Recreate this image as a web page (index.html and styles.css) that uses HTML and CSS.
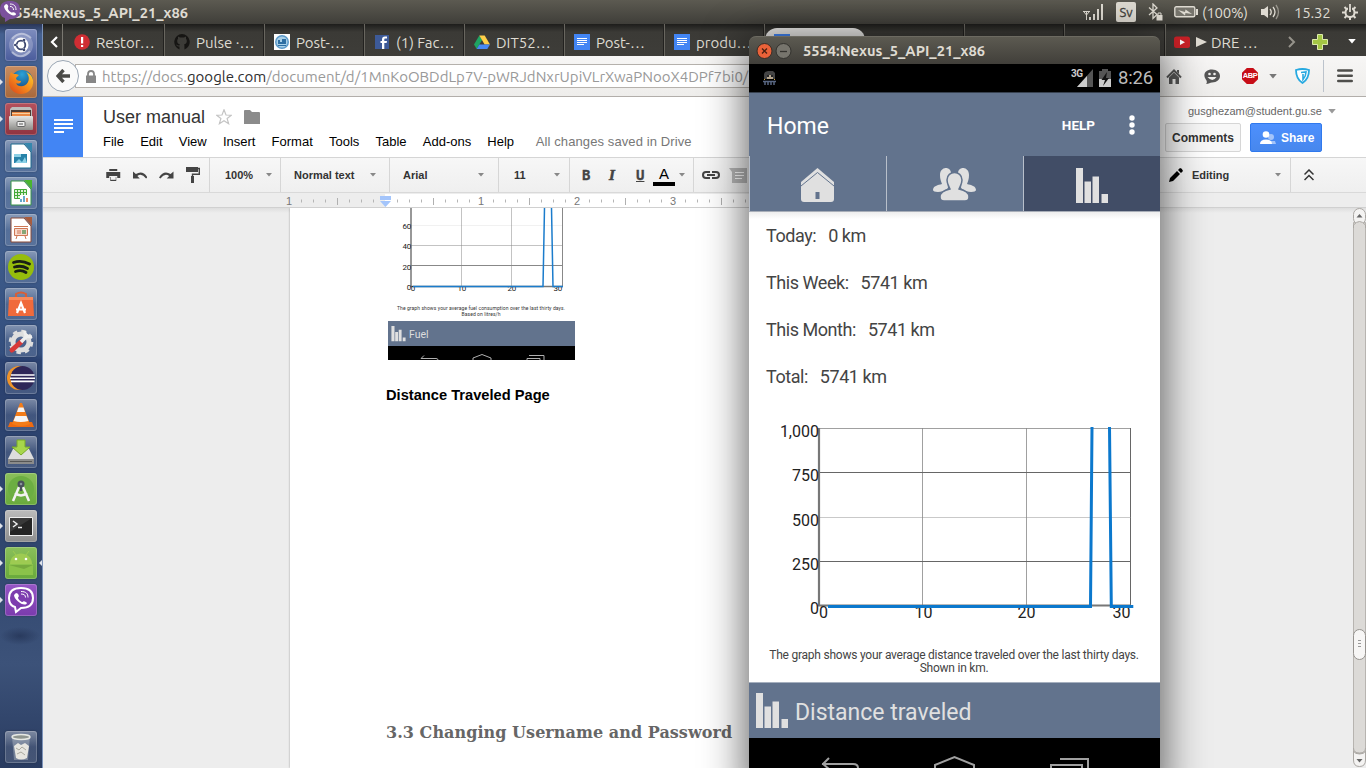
FILE: index.html
```html
<!DOCTYPE html>
<html lang="en">
<head>
<meta charset="utf-8">
<title>User manual</title>
<link rel="stylesheet" href="styles.css">
</head>
<body>
<svg class="defs" width="0" height="0">
  <defs>
    <linearGradient id="metal" x1="0" y1="0" x2="0" y2="1"><stop offset="0" stop-color="#e6e6e4"/><stop offset="1" stop-color="#8d8d8a"/></linearGradient>
    <radialGradient id="globe" cx=".5" cy=".2" r=".8"><stop offset="0" stop-color="#2ba3d8"/><stop offset="1" stop-color="#123a75"/></radialGradient>
    <linearGradient id="fox" x1="1" y1="0" x2="0" y2="1"><stop offset="0" stop-color="#ffce2e"/><stop offset=".5" stop-color="#f58a1c"/><stop offset="1" stop-color="#d9401a"/></linearGradient>
    <symbol id="bars" viewBox="0 0 32 35"><path d="M0 0h7v35H0zM8.500 13.500h6.500V35H8.500zM16.500 8.500h6.500V35h-6.500zM25.500 26H32v9h-6.500z"/></symbol>
    <symbol id="gdoc" viewBox="0 0 16 16"><path fill="#4285f4" d="M0 0h16v16H0z"/><path stroke="#fff" d="M3 4.500h10M3 6.500h10M3 8.500h10M3 10.500h7" stroke-width="1.100"/></symbol>
    <symbol id="down" viewBox="0 0 6 4"><path d="M0 0h6L3 3.500z"/></symbol>
  </defs>
</svg>

<header class="panel">
  <svg class="panel-viber" viewBox="0 0 20 22"><path fill="#7b519d" d="M10 1c6 0 10 2 10 9s-4 9-10 9l-5 3v-4C1 17 0 14 0 10 0 3 4 1 10 1z"/><path fill="#fff" d="M6 4c2 0 3 3 1.800 4 0 2 3 5 4.500 4.500 1.500-1 4 .5 3.700 2C13 18 4 11 4 6z"/><path fill="none" stroke="#fff" d="M10 4c4 0 6 2 6 6M10 6.500c2 0 3.500 1 3.500 3.500"/></svg>
  <h1 class="panel-title">5554:Nexus_5_API_21_x86</h1>
  <div class="tray">
    <svg class="tray-signal" viewBox="0 0 20 16"><path fill="none" stroke="#dfdbd2" d="M0 7.500h7M1 8l2.500 3L6 8M3.500 8v8"/><path fill="#dfdbd2" d="M6 13h2v3H6zM10 10h2v6h-2zM14 5h2v11h-2zM18 0h2v16h-2z"/></svg>
    <span class="tray-lang">Sv</span>
    <svg class="tray-bt" viewBox="0 0 15 18"><path fill="none" stroke="#dfdbd2" stroke-width="1.300" d="M1 4.500l8 7-4 4V1l4 4-8 7"/><path fill="#dfdbd2" d="M8.500 12h6v5.500h-6z"/><path fill="none" stroke="#dfdbd2" d="M10 12v-2h3v2"/></svg>
    <svg class="tray-bat" viewBox="0 0 24 12"><rect x=".8" y=".8" width="20" height="10" rx="1.500" fill="#77756d" stroke="#dfdbd2" stroke-width="1.400"/><path fill="#dfdbd2" d="M22 3h2v6h-2zM4 4l7 2 .5-2.500L18 8l-6.500-1-.5 2.500z"/></svg>
    <span class="tray-pct">(100%)</span>
    <svg class="tray-vol" viewBox="0 0 19 16"><path fill="#dfdbd2" d="M0 5h3l4-3v12l-4-3H0z"/><g fill="none" stroke="#dfdbd2" stroke-width="1.300"><path d="M9 5q2.500 3 0 6M12 3q4 5 0 10"/><path opacity=".5" d="M15 1q5 7 0 14"/></g></svg>
    <span class="tray-time">15.32</span>
    <svg class="tray-gear" viewBox="0 0 16 16"><circle cx="8" cy="8.500" r="4.500" fill="none" stroke="#dfdbd2" stroke-width="2"/><path stroke="#dfdbd2" stroke-width="2" d="M0 8.500h4M12 8.500h4M8 12v4M2.500 3l2.500 2.500M13.500 3L11 5.500M2.500 14L5 11.500M13.500 14L11 11.500"/><path stroke="#4a4942" stroke-width="4" d="M8 3v5"/><path stroke="#dfdbd2" stroke-width="1.800" d="M8 0v8"/></svg>
  </div>
</header>

<div class="desktop">
  <nav class="launcher">
    <div class="tile t-dash"><svg viewBox="0 0 32 32"><circle cx="16" cy="16" r="12" fill="#a6aed0" opacity=".5"/><path d="M7 10Q16 0 26 9M25 22Q16 32 7 23" stroke="#fff" opacity=".4" fill="none" stroke-width="2"/><circle cx="16" cy="16" r="7.500" fill="#fff"/><circle cx="16" cy="16" r="4.300" fill="none" stroke="#3c466e" stroke-width="1.800"/><path stroke="#fff" stroke-width="1.200" d="M13 16h-4M18 12.500l2-3.500M18 19.500l2 3.500"/><g fill="#3c466e"><circle cx="10.300" cy="16" r="1.300"/><circle cx="19" cy="11" r="1.300"/><circle cx="19" cy="21" r="1.300"/></g></svg></div>
    <div class="tile t-fox run"><svg viewBox="0 0 32 32"><circle cx="17" cy="15" r="11" fill="url(#globe)"/><path fill="url(#fox)" d="M6 6c1 2 3 2 5 2l3 1-3 3c0 2 2 3 5 3 0 3-4 3-5 2 1 4 9 5 12-1 2-4 0-8-2-10 6 2 8 8 7 12-1 6-6 10-12 10C8 28 3 21 4 14c0-3 1-6 2-8z"/></svg></div>
    <div class="tile t-files run"><svg viewBox="0 0 32 32"><path fill="#bdbdba" d="M5 6l2-2h18l2 2v8H5z"/><path fill="#4c3c34" d="M6 7h20v7H6z"/><path fill="#e98743" d="M7 9h18v5H7z"/><path fill="#f8cf9e" d="M7 10h18v1H7z"/><rect x="4" y="13" width="24" height="14" rx="1" fill="url(#metal)"/><rect x="12" y="18.500" width="8" height="5" rx="1" fill="#eee" stroke="#666"/><path stroke="#555" d="M14 21h4"/></svg></div>
    <div class="tile"><svg viewBox="0 0 32 32"><path fill="#fff" stroke="#1c6a8d" d="M6 4h13l7 8v16H6z"/><path fill="#3587ad" d="M19 3h8v9z"/><path fill="#2783a9" d="M9 14h13v9H9z"/><path fill="#8bd0e5" d="M9 14h7v3H9zM10 23l4-4 3 3 3-5 2 6z"/></svg></div>
    <div class="tile"><svg viewBox="0 0 32 32"><path fill="#fff" stroke="#389548" d="M6 4h13l7 8v16H6z"/><path fill="#49b52f" d="M19 3h8v9z"/><path fill="#dff1d9" stroke="#43aa37" d="M9.500 12.500h12v9h-12zM9 15.500h13M9 18.500h13M12.500 12v10M15.500 12v10M18.500 12v10"/><path fill="#fff" d="M15 18h8v7h-8z"/><path stroke="#67a9cc" stroke-width="2" d="M16 25v-3M19 25v-6"/><path stroke="#ed8d62" stroke-width="2" d="M22 25v-4"/></svg></div>
    <div class="tile"><svg viewBox="0 0 32 32"><path fill="#fff" stroke="#8b4a36" d="M6 4h13l7 8v16H6z"/><path fill="#a75c3e" d="M19 3h8v9z"/><path fill="#f9d9cb" stroke="#ce7754" d="M9.500 14.500h13v7h-13zM12 22l-1 3M20 22l1 3"/><path stroke="#ce7754" d="M9 12.500h14M12 17h4M12 19h4"/><path fill="#86a777" d="M17 16h4v4h-4z"/></svg></div>
    <div class="tile"><svg viewBox="0 0 32 32"><circle cx="16" cy="16" r="13" fill="#96bd0c"/><path fill="none" stroke="#191f15" stroke-linecap="round" stroke-width="2.800" d="M8.500 11.500q8-3 16 1.500M9.500 16q7-2 13 1.500M10.500 20.500q6-2 10.500 1"/></svg></div>
    <div class="tile"><svg viewBox="0 0 32 32"><path fill="none" stroke="#d95e36" stroke-width="2" d="M11 9V6q5-3 10 0v3"/><path fill="#f06a3b" d="M4 9h24l1 19H3z"/><path fill="#f88a5c" d="M4 9h24v3H4z"/><path fill="none" stroke="#fff" stroke-width="2.200" d="M12 25l4-10 4 10M11 21.500h10"/></svg></div>
    <div class="tile"><svg viewBox="0 0 32 32"><circle cx="16" cy="17" r="8" fill="none" stroke="#dedede" stroke-width="5"/><circle cx="16" cy="17" r="10.800" fill="none" stroke="#dedede" stroke-width="3" stroke-dasharray="4.400 4.080"/><path stroke="#d83939" stroke-width="5" stroke-linecap="round" d="M7 25l9-8"/><path stroke="#eee" stroke-width="3.500" d="M16 17l6-6"/><path fill="none" stroke="#eee" stroke-width="3" d="M20 6q-1 6 7 6"/></svg></div>
    <div class="tile"><svg viewBox="0 0 32 32"><circle cx="14" cy="16" r="12" fill="#ef9329"/><circle cx="17.500" cy="16" r="12" fill="#2f2758"/><path stroke="#fff" stroke-width="1.600" d="M6 13h23.500M5 16.200h25M6 19.400h23.500"/></svg></div>
    <div class="tile"><svg viewBox="0 0 32 32"><path fill="#ee6a10" d="M5 23h22l2 5H3z"/><path fill="#f47c18" d="M15 4h2l8 21q-9 4-18 0z"/><path fill="#f5f5f5" d="M13.500 8.500h5l1.500 4.500h-8zM10.500 17h11l2 5q-8 2-15 0z"/></svg></div>
    <div class="tile"><svg viewBox="0 0 32 32"><path fill="#ddd" d="M8 13h16l5 10H3z"/><path fill="#8b8b8b" d="M3 23h26v5H3z"/><path stroke="#555" d="M5 25.500h22"/><path fill="#a7d64b" stroke="#78aa28" d="M12 4h8v7h5l-9 8-9-8h5z"/></svg></div>
    <div class="tile t-green run"><svg viewBox="0 0 32 32"><circle cx="16" cy="16" r="13" fill="#6cae42"/><path fill="none" stroke="#f2f2f2" stroke-width="2.500" d="M14 14L8 28M18 14l6 14M10 20q6 5 12 0"/><circle cx="16" cy="11" r="3.500" fill="#49515a"/><path stroke="#49515a" stroke-width="2" d="M16 12v6"/><circle cx="16" cy="11" r="1.300" fill="#89939a"/></svg></div>
    <div class="tile t-term run"><svg viewBox="0 0 32 32"><path fill="#252525" stroke="#eee" d="M4.500 7.500h23v18h-23z"/><path fill="#484848" d="M5 8h22L5 22z" opacity=".6"/><path fill="none" stroke="#eee" stroke-width="1.500" d="M8 11l4 3-4 3M13 17.500h4"/></svg></div>
    <div class="tile t-green run focus"><svg viewBox="0 0 32 32"><path fill="#8bc34a" d="M4 17h24v11H4z"/><path fill="#9ecb52" d="M5 17C5 3 27 3 27 17z"/><path fill="#76aa3e" d="M4 18h24l-9 4z"/><path stroke="#9ecb52" d="M8 4l3 4M24 4l-3 4"/><circle cx="11" cy="12" r="1.300" fill="#fff"/><circle cx="21" cy="12" r="1.300" fill="#fff"/></svg></div>
    <div class="tile t-viber run"><svg viewBox="0 0 32 32"><path fill="#7d3daf" stroke="#fff" stroke-width="2" d="M16 4c8 0 12 3 12 10 0 8-5 10-12 10l-5 4-1-5c-4-1-6-4-6-9C4 7 8 4 16 4z"/><path fill="#fff" d="M11 9c2 0 4 3 2 4.500 0 2 3 4.500 4.500 4.500 1-2 4 0 4.500 1-2 5-13-3-13-8z"/><path fill="none" stroke="#fff" d="M16 7.500c5 0 7 2 7 6M16 10c3 0 4.500 1 4.500 3.500"/></svg></div>
    <div class="tile t-trash"><svg viewBox="0 0 32 32"><path fill="#d5dade" opacity=".35" d="M7 5h18l-2 24H9z"/><ellipse cx="16" cy="6" rx="9" ry="2.500" fill="#8e958f" stroke="#e5e8e3" stroke-width="1.500"/><path fill="#e7e6e0" d="M9 15l4-3 3 2 4-2 4 3-2 12q-6 3-11 0z"/><path fill="none" stroke="#aaa99f" d="M11 17l3 2 3-3 4 3M12 23l4-2 4 3"/></svg></div>
  </nav>

  <main class="browser">
    <div class="tabstrip">
      <div class="tab-back"><svg viewBox="0 0 8 12"><path fill="none" stroke="#fff" stroke-width="2.200" d="M7 1L2 6l5 5"/></svg></div>
      <div class="tab first"><svg viewBox="0 0 16 16"><circle cx="8" cy="8" r="7.800" fill="#d02d33"/><path fill="#fff" d="M7 3h2.200v6.500H7zM7 11h2.200v2H7z"/></svg><span>Restor…</span></div>
      <div class="tab"><svg viewBox="0 0 16 16"><path fill="#161513" d="M8 0a8 8 0 0 0-2.500 15.500v-3C3 13 2.500 11 2 10.500c1 0 1.500 1.500 3.500 1l.5-1C3 10 2.500 6.500 4 4.700L4 2.500l2 1h4l2-1v2.200C13.500 6.500 13 10 10 10.500c.5.500.500 1 .5 5A8 8 0 0 0 8 0z"/></svg><span>Pulse ·…</span></div>
      <div class="tab"><svg viewBox="0 0 16 16"><path fill="#fff" d="M0 0h16v16H0z"/><circle cx="8" cy="8" r="7" fill="#5b99c9"/><circle cx="8" cy="8" r="5.500" fill="#a9d0e8"/><path fill="#2e6fa3" d="M4 6h2v2h2V5h4v5H4zM4 11h8v1H4z"/></svg><span>Post-…</span></div>
      <div class="tab"><svg viewBox="0 0 16 16"><path fill="#3d5a98" d="M1 1h14v14H1z"/><path fill="#fff" d="M8 15V9H6.500V7H8V5.500C8 3.500 9 2.500 11 2.500h2v2h-1.500c-1 0-1.200.4-1.200 1.200V7H13l-.4 2h-2.300v6z"/></svg><span>(1) Fac…</span></div>
      <div class="tab"><svg viewBox="0 0 16 16"><path fill="#1fa463" d="M5.300 1.500L0 10.500l2.700 4.500 5.400-9z"/><path fill="#ffcf48" d="M5.300 1.500h5.400l5.300 9h-5.400z"/><path fill="#4688f4" d="M5.300 10.500H16L13.300 15H2.700z"/></svg><span>DIT52…</span></div>
      <div class="tab"><svg><use href="#gdoc"/></svg><span>Post-…</span></div>
      <div class="tab"><svg><use href="#gdoc"/></svg><span>produ…</span></div>
      <div class="tab active"><svg><use href="#gdoc"/></svg></div>
      <div class="tab"></div><div class="tab"></div><div class="tab last"></div>
      <div class="tab yt"><svg viewBox="0 0 16 16"><rect y="2.500" width="16" height="11.500" rx="2.500" fill="#cc2127"/><path fill="#fff" d="M6 5.500l5 2.700L6 11z"/></svg><span><svg class="play" viewBox="0 0 11 10"><path fill="#dfdbd2" d="M0 0l11 5-11 5z"/></svg>DRE …</span></div>
      <div class="tab-tools">
        <svg class="chev" viewBox="0 0 8 12"><path fill="none" stroke="#96938b" stroke-width="2" d="M1 1l5 5-5 5"/></svg>
        <svg class="plus" viewBox="0 0 16 16"><path fill="#a3c644" stroke="#dcebaa" d="M5.500.5h5v5h5v5h-5v5h-5v-5h-5v-5h5z"/></svg>
        <svg class="caret"><use href="#down" fill="#fff"/></svg>
      </div>
    </div>

    <div class="navbar">
      <div class="back"><svg viewBox="0 0 14 14"><path fill="none" stroke="#4b4b48" stroke-width="3.400" d="M7.500 1L2 7l5.500 6M2.500 7H14"/></svg></div>
      <div class="url"><svg class="lock" viewBox="0 0 10 13"><path fill="#878787" d="M0 5.500h10V13H0z"/><path fill="none" stroke="#878787" stroke-width="1.800" d="M2 6V4q0-3 3-3t3 3v2"/></svg><p>https://docs.<b>google.com</b>/document/d/1MnKoOBDdLp7V-pWRJdNxrUpiVLrXwaPNooX4DPf7bi0/</p></div>
      <div class="nav-tools">
        <svg viewBox="0 0 16 15" class="n-home"><path fill="none" stroke="#555" stroke-width="2" d="M1 8.500l7-7 7 7"/><path fill="#555" d="M3 8.500l5-5 5 5V15H9.500v-5h-3v5H3zM11 1h2v4l-2-2z"/></svg>
        <svg viewBox="0 0 16 15" class="n-face"><path fill="#555" d="M8 .5c5 0 8 3 8 6.500s-3 6.500-8 6.500c-2 0-3 1.500-6 1.500 1-1 1-2 .5-3.500C-2 6 1 .5 8 .5z"/><g fill="#f0efed"><circle cx="5.500" cy="5" r="1.300"/><circle cx="10.500" cy="5" r="1.300"/><path d="M3.500 8h9q-4 6-9 0z"/></g></svg>
        <span class="abp">ABP</span>
        <svg class="n-down"><use href="#down" fill="#777"/></svg>
        <svg viewBox="0 0 15 16" class="n-shield"><path fill="#fff" stroke="#27a9e0" stroke-width="1.800" d="M1 2q6.500-2 13 0 0 9-6.500 13Q1 11 1 2z"/><path fill="none" stroke="#27a9e0" stroke-width="1.600" d="M6 4.500l5-.5q0 4-3 7.500V6"/></svg>
        <i class="n-sep"></i>
        <svg viewBox="0 0 16 14" class="n-menu"><path stroke="#4e4e4b" stroke-width="2.600" stroke-linecap="round" d="M1.300 1.500h13.400M1.300 6.700h13.400M1.300 12h13.400"/></svg>
      </div>
    </div>

    <div class="dochead">
      <div class="doclogo"><svg viewBox="0 0 19 14"><path fill="#fff" d="M0 0h19v2H0zM0 4h19v2H0zM0 8h19v2H0zM0 12h10v2H0z"/></svg></div>
      <div class="docinfo">
        <div class="titlerow"><h2>User manual</h2><svg class="star" viewBox="0 0 16 16"><path fill="none" stroke="#c4c4c4" stroke-width="1.200" d="M8 .8l2 5.200 5.300.2-4.200 3.300 1.500 5.200L8 11.800l-4.600 2.900 1.500-5.200L.7 6.200 6 6z"/></svg><svg class="folder" viewBox="0 0 16 14"><path fill="#8b8b8b" d="M0 1q0-1 1-1h5l2 2h7q1 0 1 1v11H0z"/></svg></div>
        <div class="menus"><span>File</span><span>Edit</span><span>View</span><span>Insert</span><span>Format</span><span>Tools</span><span>Table</span><span>Add-ons</span><span>Help</span><em>All changes saved in Drive</em></div>
      </div>
      <div class="account">
        <p>gusghezam@student.gu.se<svg><use href="#down" fill="#999"/></svg></p>
        <div><button class="comments">Comments</button><button class="share"><svg viewBox="0 0 16 13"><g fill="#a4c4fa"><circle cx="11" cy="6" r="3"/><path d="M9 10h6l1 3H9z"/></g><g fill="#fff"><circle cx="6" cy="3.500" r="3.300"/><path d="M0 13q0-4.500 6-4.500t6 4.500z"/></g></svg>Share</button></div>
      </div>
    </div>

    <div class="toolbar">
      <div class="tg tg-a">
        <svg viewBox="0 0 14 12"><path fill="#444" d="M3 0h8v2H3zM0 3h14v6h-3V7H3v2H0zM4 8h6v4H4z"/><path fill="#f3f3f3" d="M4.500 8h5v2.800h-5z"/></svg>
        <svg viewBox="0 0 15 9"><path fill="#444" d="M0 1v7h7L4.500 5.500Q9 2 13.500 8L15 7Q10-1 3 3.500z"/></svg>
        <svg viewBox="0 0 15 9"><path fill="#444" d="M15 1v7H8l2.500-2.500Q6 2 1.500 8L0 7q5-8 12-3.500z"/></svg>
        <svg viewBox="0 0 14 16" class="roller"><path fill="#444" d="M0 0h12v5H0z"/><path fill="none" stroke="#444" stroke-width="1.400" d="M12 1.500h1.300v5.800H6.500V10"/><path fill="#444" d="M5 9h3v7H5z"/></svg>
      </div>
      <div class="tg tg-b">100%<svg><use href="#down"/></svg></div>
      <div class="tg tg-c">Normal text<svg><use href="#down"/></svg></div>
      <div class="tg tg-d">Arial<svg><use href="#down"/></svg></div>
      <div class="tg tg-e">11<svg><use href="#down"/></svg></div>
      <div class="tg tg-f"><b>B</b><i>I</i><u>U</u><span class="color">A</span><svg><use href="#down"/></svg></div>
      <div class="tg tg-g"><svg class="link" viewBox="0 0 18 8"><path fill="none" stroke="#444" stroke-width="2" d="M8 1H4Q1 1 1 4t3 3h4M10 1h4q3 0 3 3t-3 3h-4M5 4h8"/></svg><svg class="cmt" viewBox="0 0 18 15"><path fill="#b8b8b8" d="M0 0h18v15H3V4z"/><path stroke="#fff" d="M6 4.500h9M6 7.500h9M6 10.500h7"/></svg></div>
      <div class="tg tg-h"><svg class="pen" viewBox="0 0 14 14"><path fill="#000" d="M0 14l1-4 7-7 3 3-7 7zM9 2l2-2q2 0 3 3l-2 2z"/></svg>Editing<svg class="d"><use href="#down"/></svg></div>
      <div class="tg tg-i"><svg viewBox="0 0 10 12"><path fill="none" stroke="#333" stroke-width="1.500" d="M.500 5.500L5 1l4.500 4.500M.500 11L5 6.500 9.500 11"/></svg></div>
    </div>

    <svg class="ruler" viewBox="43 193 1323 15">
      <path fill="#ededed" d="M43 193h1323v15H43z"/><path fill="#fff" d="M385 194h685v13H385z"/>
      <path stroke="#b5b5b5" stroke-dasharray="1 11" d="M301 201h84M397 201h78M493 201h78M589 201h78M685 201h80" stroke-width="3"/>
      <path stroke="#b0b0b0" d="M337.500 198v7M433.500 198v7M529.500 198v7M625.500 198v7M721.500 198v7"/>
      <g class="ruler-n"><text x="289" y="205">1</text><text x="481" y="205">1</text><text x="577" y="205">2</text><text x="673" y="205">3</text></g>
      <path fill="#a4c5fb" d="M380 196h11v4h-11zM380 201h11l-5.500 6z"/><path stroke="#d0d0d0" d="M43 207.500h1323"/>
    </svg>

    <div class="canvas">
      <article class="page">
        <svg class="figure" viewBox="386 208 190 152">
          <g stroke="#888" fill="none"><path opacity=".5" d="M461.500 208v78M511.500 208v78"/><path opacity=".12" d="M411 225.500h152"/><path opacity=".5" d="M411 245.500h152"/><path d="M411 265.500h152M562.500 208v79"/><path stroke="#777" stroke-width="1.500" d="M411 208v78.500h152"/></g>
          <g class="fig-ax"><text x="411" y="229">60</text><text x="411" y="249">40</text><text x="411" y="269.500">20</text><text x="411" y="290">0</text><text x="415" y="291">0</text><text x="466" y="291">10</text><text x="516" y="291">20</text><text x="562" y="291">30</text></g>
          <path fill="none" stroke="#1b7ccc" stroke-width="1.500" d="M413 286.500h130l1.500-78.500M551.500 208l1.500 78.500h10"/>
          <g class="fig-cap"><text x="481" y="310" textLength="168">The graph shows your average fuel consumption over the last thirty days.</text><text x="481" y="316" textLength="39">Based on litres/h</text></g>
          <path fill="#62738d" d="M388 321h187v26H388z"/><path d="M388 346h187v14H388z"/>
          <use href="#bars" x="391" y="326" width="15" height="15.500" fill="#e0e0e0"/><text class="fig-fuel" x="409" y="338">Fuel</text>
          <path fill="none" stroke="#b0b0b0" d="M438 360q0-1.500-2-1.500h-15M424 355.500l-3 3M473 360v-2l9-3.500 9 3.500v2M527 360v-1.500h13v1.500M529 355.500h15v4.500"/>
        </svg>
        <h3>Distance Traveled Page</h3>
        <h4>3.3 Changing Username and Password</h4>
      </article>
      <svg class="scroll" viewBox="0 0 13 560"><path fill="#dcdad7" stroke="#b7b4b0" d="M.5 14.500h12v531H.5z"/><rect x=".5" y=".5" width="12" height="16" rx="6" fill="#f4f3f2" stroke="#aaa7a3"/><path fill="#dcdad7" stroke="#aaa7a3" d="M.5 20V17q6-7 12 0v3M.5 540q0 5 6 5t6-5"/><path fill="#f4f3f2" stroke="#aaa7a3" d="M.5 543v9q0 6.500 6 6.500t6-6.500v-9q-1 3-6 3t-6-3z"/><path fill="#666" d="M3.500 9.500h6l-3-3.500zM3.500 551h6l-3 3.500z"/><rect x=".5" y="421.500" width="12" height="30" rx="6" fill="#f7f6f5" stroke="#96938f"/><path stroke="#999" d="M5 432.500h3M5 435.500h3M5 438.500h3"/></svg>
    </div>
  </main>
</div>

<section class="emulator">
  <header class="em-title"><svg viewBox="0 0 38 18"><circle cx="8.500" cy="9" r="7.500" fill="#ea6239" stroke="#3a2c25"/><path stroke="#4b2012" stroke-width="1.300" d="M6 6.500l5 5M11 6.500l-5 5"/><circle cx="27.500" cy="9" r="7.500" fill="#77756d" stroke="#33322e"/><path stroke="#35342f" stroke-width="1.300" d="M24 9.500h7"/></svg><h1>5554:Nexus_5_API_21_x86</h1></header>
  <div class="em-status">
    <svg class="app" viewBox="0 0 13 14"><path fill="#444" d="M2 1l3-1h5l2 2v6H1V3z"/><path fill="#b5a58d" d="M4 4h6v4H4z"/><path fill="#222" d="M4 4h2v2H4zM8 4h2v2H8z"/><path stroke="#596783" stroke-width="1.500" d="M0 10.500h13M2 10v4M5 10v4M8 10v4M11 10v4"/><path fill="#d0a33a" d="M1 8h1v1H1zM11 8h1v1h-1z"/></svg>
    <svg class="cell" viewBox="0 0 19 18"><text x="0" y="8">3G</text><path fill="#555" d="M3 18L19 0v18z"/><path fill="#ccc" d="M3 18L13 7v11z"/></svg>
    <svg class="bat" viewBox="0 0 12 18"><path fill="#555" d="M0 2h3V0h6v2h3v16H0z"/><path fill="#ccc" d="M0 10h12v8H0z"/><path fill="#111" d="M8 3L2.500 11H6l-2 6 6-8H7z"/></svg>
    <time>8:26</time>
  </div>
  <div class="em-bar"><h2>Home</h2><span>HELP</span><svg viewBox="0 0 6 20"><g fill="#fff"><circle cx="3" cy="3" r="2.700"/><circle cx="3" cy="10" r="2.700"/><circle cx="3" cy="17" r="2.700"/></g></svg></div>
  <div class="em-tabs">
    <div><svg class="house" viewBox="0 0 33 34"><path fill="#e0e0e0" d="M0 14L16.500 0 33 14v17q0 3-3 3H3q-3 0-3-3z"/><path fill="none" stroke="#62738d" d="M0 18L16.500 4.500 33 18"/><path fill="#62738d" d="M14.500 24h4v7h-4z"/></svg></div>
    <div><svg class="people" viewBox="0 0 43 33"><g fill="#e0e0e0"><path d="M7 7c0-9 11-9 11-2l-4 7 1 8c-7 6-15 4-15 2 0-4 5-5 9-6-1-3-2-5-2-9zM36 7c0-9-11-9-11-2l4 7-1 8c7 6 15 4 15 2 0-4-5-5-9-6 1-3 2-5 2-9z"/><path stroke="#62738d" stroke-width="1.500" d="M14 12c0-10 15-10 15 0 0 4-2 6-3 9 5 1 10 3 10 8 0 2-1 4-4 4H11c-3 0-4-2-4-4 0-5 5-7 10-8-1-3-3-5-3-9z"/></g></svg></div>
    <div class="on"><svg class="stat"><use href="#bars" fill="#e0e0e0"/></svg></div>
  </div>
  <div class="em-body">
    <dl><div><dt>Today:</dt><dd>0 km</dd></div><div><dt>This Week:</dt><dd>5741 km</dd></div><div><dt>This Month:</dt><dd>5741 km</dd></div><div><dt>Total:</dt><dd>5741 km</dd></div></dl>
    <svg class="chart" viewBox="749 400 411 247">
      <g fill="none" stroke="#888"><path opacity=".8" d="M922.500 428v177M1026.500 428v177M820 428.500h311"/><path stroke="#666" d="M820 472.500h311M820 561.500h311M1130.500 428v178"/><path opacity=".45" d="M820 517.500h311"/><path stroke="#777" stroke-width="2.200" d="M819 428v177.500h312"/></g>
      <g class="ax y"><text x="819" y="437">1,000</text><text x="819" y="481">750</text><text x="819" y="526">500</text><text x="819" y="570">250</text><text x="819" y="614">0</text></g>
      <g class="ax x"><text x="823.500" y="618">0</text><text x="923.500" y="618">10</text><text x="1026.500" y="618">20</text><text x="1121.500" y="618">30</text></g>
      <path fill="none" stroke="#0b78cd" stroke-width="3" d="M828 606.500h262.500L1092 427M1109.500 427l1.800 179.500h22"/>
    </svg>
    <p>The graph shows your average distance traveled over the last thirty days.<br>Shown in km.</p>
  </div>
  <div class="em-foot"><svg><use href="#bars" fill="#e0e0e0"/></svg><span>Distance traveled</span></div>
  <div class="em-nav"><svg viewBox="0 0 411 30"><g fill="none" stroke="#a0a0a0" stroke-width="2"><path d="M109 30q0-4-5-4H73M80 20l-6 6 6 5M186 30v-3l19.500-8 19.500 8v3M302 30v-3h31v3M311 21h28v9"/></g></svg></div>
</section>
</body>
</html>
```
FILE: styles.css
```css
* { box-sizing: border-box; }
body { margin: 0; width: 1366px; height: 768px; overflow: hidden; display: flex; flex-direction: column; font-family: "Liberation Sans", Arial, sans-serif; background: #ededed; white-space: nowrap; position: relative; }
h1, h2, h3, h4, p, dl, dd { margin: 0; font-weight: normal; }
svg { display: block; flex: none; }
.defs { position: absolute; }

.panel { height: 24px; flex: none; display: flex; align-items: center; background: linear-gradient(#5c5a51, #3f3e39); color: #dfdbd2; font-family: Ubuntu, "Noto Sans", sans-serif; position: relative; }
.panel-viber { position: absolute; left: 0; top: 0; width: 20px; height: 22px; }
.panel-title { font-size: 14.670px; font-weight: bold; padding-left: 6px; }
.tray { margin-left: auto; display: flex; align-items: center; height: 24px; padding-right: 8px; font-size: 15px; }
.tray-signal { width: 20px; height: 16px; margin-right: 13px; }
.tray-lang { width: 20px; height: 20px; border-radius: 2px; background: #dfdbd2; color: #45443e; font-size: 13px; -webkit-text-stroke: .3px #45443e; line-height: 20px; text-align: center; margin-right: 12px; }
.tray-bt { width: 15px; height: 18px; margin-right: 11px; }
.tray-bat { width: 24px; height: 12px; margin-right: 4px; }
.tray-pct { width: 47px; font-size: 15px; letter-spacing: -.3px; margin-right: 12px; }
.tray-vol { width: 19px; height: 16px; margin-right: 14px; }
.tray-time { width: 35px; font-size: 15px; letter-spacing: -.2px; margin-right: 13px; }
.tray-gear { width: 16px; height: 16px; }

.desktop { flex: 1; display: flex; min-height: 0; }
.launcher { width: 43px; flex: none; padding: 5px 0 5px 5px; display: flex; flex-direction: column; gap: 5px; border-right: 1px solid #7c93ba; background: radial-gradient(ellipse 20px 9px at 20px 612px, #1e2c4d99, transparent), linear-gradient(#2a3658, #456090 10px, #42608f 200px, #334e7d 330px, #2a4170 336px, #30466e 520px, #3c5279 640px, #293b60); }
.tile { width: 32px; height: 32px; flex: none; border-radius: 3px; position: relative; box-shadow: inset 0 0 0 1px rgba(255,255,255,.2), 0 0 2px rgba(0,0,0,.3); background: linear-gradient(rgba(255,255,255,.38), rgba(255,255,255,.1) 50%, rgba(255,255,255,.13)); }
.tile svg { width: 32px; height: 32px; }
.t-dash { background: linear-gradient(#7e8dbe, #4a5c9c); }
.t-fox { background: linear-gradient(#c98d60, #a8683b); }
.t-files { background: linear-gradient(#b5515c, #903440); }
.t-green { background: linear-gradient(#8abf5b, #69aa3b); }
.t-term { background: linear-gradient(#bcbcbc, #8d8d8d); }
.t-viber { background: linear-gradient(#9556c5, #7b3bad); }
.t-trash { margin-top: auto; }
.run::before { content: ""; position: absolute; left: -5px; top: 13px; border: 3px solid transparent; border-left-color: #dfe3ea; border-right: 0; }
.focus::after { content: ""; position: absolute; right: -5px; top: 13px; border: 3px solid transparent; border-right-color: #dfe3ea; border-left: 0; }

.browser { flex: 1; min-width: 0; display: flex; flex-direction: column; }
.tabstrip { height: 32px; flex: none; display: flex; background: linear-gradient(#1d1d1b, #3b3a36 8px, #3e3d39); color: #dfdbd2; font-family: Ubuntu, "Noto Sans", sans-serif; font-size: 15px; }
.tab-back { width: 20px; padding: 12px 0 0 7px; border-right: 1px solid #7a7871; }
.tab-back svg { width: 8px; height: 12px; }
.tab { width: 100px; padding: 4px 0 0 9px; display: flex; align-items: center; gap: 6px; border-right: 1px solid #68665f; box-shadow: inset -1px 0 #22211f; }
.tab > svg { width: 16px; height: 16px; }
.tab.first { width: 102px; padding-left: 11px; }
.tab.active { background: #e9e8e6; border-radius: 12px 12px 0 0; margin-top: 4px; border: 0; padding: 6px 0 0 9px; align-items: flex-start; box-shadow: none; }
.tab.last { width: 101px; }
.tab.yt { width: 105px; padding-left: 8px; border: 0; box-shadow: none; }
.tab span { display: flex; align-items: center; }
.play { width: 11px; height: 10px; margin-right: 4px; }
.tab-tools { display: flex; align-items: center; padding-top: 3px; margin-left: auto; padding-right: 10px; }
.chev { width: 8px; height: 12px; margin-right: 16px; }
.plus { width: 16px; height: 16px; margin-right: 20px; }
.caret { width: 8px; height: 5px; }

.navbar { height: 41px; flex: none; display: flex; align-items: center; background: linear-gradient(#f7f6f5, #eeedeb); border-bottom: 1px solid #b2aeaa; padding-left: 4px; }
.back { width: 32px; height: 32px; border-radius: 50%; border: 1px solid #9aa6b4; background: #fafafa; display: grid; place-items: center; position: relative; z-index: 1; }
.back svg { width: 14px; height: 14px; }
.url { width: 1082px; height: 24px; margin-left: -4px; background: #fff; border: 1px solid #b5b1ac; display: flex; align-items: center; padding-left: 10px; gap: 6px; }
.lock { width: 10px; height: 13px; }
.url p { font: 15px Ubuntu, "Noto Sans", sans-serif; color: #999; padding-top: 1px; }
.url b { font-weight: normal; color: #2e2e2e; }
.nav-tools { margin-left: auto; padding-right: 13px; display: flex; align-items: center; }
.n-home { width: 16px; height: 15px; margin-right: 22px; }
.n-face { width: 16px; height: 15px; margin-right: 22px; }
.abp { width: 16px; height: 16px; background: #c70d17; color: #fff; font: bold 7.500px/16px "Liberation Sans", sans-serif; letter-spacing: -.4px; text-align: center; clip-path: polygon(30% 0, 70% 0, 100% 30%, 100% 70%, 70% 100%, 30% 100%, 0 70%, 0 30%); margin-right: 11px; }
.n-down { width: 8px; height: 5px; margin-right: 18px; }
.n-shield { width: 15px; height: 16px; margin-right: 13px; }
.n-sep { width: 1px; height: 32px; background: #bcc3cc; margin-right: 13px; }
.n-menu { width: 16px; height: 14px; }

.dochead { height: 60px; flex: none; background: #fff; display: flex; }
.doclogo { width: 40px; background: #4285f4; padding: 22px 0 0 11px; }
.doclogo svg { width: 19px; height: 14px; }
.docinfo { padding: 9px 0 0 20px; }
.titlerow { display: flex; align-items: center; height: 22px; }
.titlerow h2 { font-size: 18px; color: #333; width: 113px; }
.star { width: 16px; height: 16px; margin-right: 12px; }
.folder { width: 16px; height: 14px; }
.menus { display: flex; gap: 16.200px; font-size: 13px; line-height: 15px; margin-top: 6px; color: #000; }
.menus em { font-style: normal; color: #777; margin-left: 5.500px; letter-spacing: .1px; }
.account { margin-left: auto; padding: 7px 30px 0 0; }
.account p { font-size: 11px; line-height: 15px; color: #666; display: flex; align-items: center; justify-content: flex-end; gap: 6px; }
.account p svg { width: 8px; height: 5px; }
.account div { display: flex; justify-content: flex-end; gap: 9px; margin: 4px 14px 0 -40px; }
.account button { height: 29px; padding: 0; font: bold 12px "Liberation Sans", sans-serif; border-radius: 2px; }
.comments { width: 76px; color: #333; background: #f7f7f7; border: 1px solid #d6d6d6; }
.share { width: 72px; background: linear-gradient(#4d90fe, #4787ed); border: 1px solid #3079ed; color: #fff; display: flex; align-items: center; padding-left: 9px !important; gap: 5px; }
.share svg { width: 16px; height: 13px; }

.toolbar { height: 36px; flex: none; display: flex; border-top: 1px solid #d5d5d5; background: linear-gradient(#f7f7f7, #efefef); border-bottom: 1px solid #d9d9d9; font-weight: bold; font-size: 11px; color: #333; }
.tg { display: flex; align-items: center; border-right: 1px solid #d6d6d6; }
.tg-b svg, .tg-c svg, .tg-d svg, .tg-e svg, .tg-f svg, .tg .d { width: 6px; height: 4px; fill: #888; margin-left: auto; }
.tg-a { width: 167px; padding-left: 63px; gap: 12px; }
.tg-a svg { width: 14.500px; height: 12px; }
.tg-a .roller { width: 14px; height: 16px; }
.tg-b { width: 71px; padding: 0 8px 0 15px; }
.tg-c { width: 109px; padding: 0 13px; }
.tg-d { width: 109px; padding: 0 14px 0 13px; }
.tg-e { width: 71px; padding: 0 9px 0 15px; }
.tg-f { width: 124px; padding: 0 8px 0 12px; color: #444; }
.tg-f > b, .tg-f > i, .tg-f > u { width: 27px; font-family: "DejaVu Sans Mono", monospace; font-size: 14px; -webkit-text-stroke: .3px #444; }
.tg-f > i { font-family: "DejaVu Serif", serif; font-size: 13px; }
.tg-f > u { width: 17px; }
.color { width: 22px; height: 22px; line-height: 19px; text-align: center; font-size: 15px; font-weight: normal; color: #000; border-bottom: 4px solid #000; }
.tg-g { flex: 1; border: 0; padding-left: 8px; gap: 9px; }
.link { width: 18px; height: 8px; }
.cmt { width: 18px; height: 15px; }
.tg-h { width: 129px; padding: 0 9px 0 7px; font-size: 11px; gap: 9px; }
.pen { width: 14px; height: 14px; }
.tg-i { width: 75px; border: 0; padding-left: 13px; }
.tg-i svg { width: 10px; height: 12px; }

.ruler { width: 1323px; height: 15px; }
.ruler-n { font: 11px "Liberation Sans", sans-serif; fill: #777; text-anchor: middle; }
.canvas { flex: 1; min-height: 0; display: flex; justify-content: space-between; background: linear-gradient(#dedede, #ededed 5px); }
.page { width: 817px; margin-left: 247px; padding-left: 96px; background: #fff; box-shadow: 0 0 2px rgba(0,0,0,.35); clip-path: inset(0 -4px 0 -4px); }
.figure { width: 190px; height: 152px; }
.page h3 { font-size: 14.670px; line-height: 18px; font-weight: bold; color: #000; margin-top: 26px; }
.page h4 { font: bold 16px/20px "DejaVu Serif", serif; color: #666; margin-top: 319px; letter-spacing: .05px; }
.fig-ax { font: 8px Roboto, sans-serif; fill: #222; text-anchor: end; letter-spacing: -.3px; }
.fig-cap { font: 5px Roboto, sans-serif; fill: #333; text-anchor: middle; }
.fig-fuel { font: 10.500px Roboto, sans-serif; fill: #ddd; }
.scroll { width: 13px; height: 560px; }

.emulator { position: absolute; left: 749px; top: 36px; width: 411px; height: 760px; border-radius: 7px 7px 0 0; box-shadow: 0 8px 44px 2px rgba(0,0,0,.65); font-family: Roboto, sans-serif; display: flex; flex-direction: column; }
.em-title { height: 28px; flex: none; display: flex; align-items: center; border-radius: 7px 7px 0 0; background: linear-gradient(#5c5a51, #413f3a); border-top: 1px solid #6c6a61; padding-left: 7px; }
.em-title svg { width: 38px; height: 18px; }
.em-title h1 { margin-left: 9px; color: #dfdbd2; font: bold 14.670px Ubuntu, "Noto Sans", sans-serif; }
.em-status { height: 29px; flex: none; background: #000; display: flex; align-items: center; padding: 0 7px 0 14px; border-bottom: 1px solid #37414f; }
.app { width: 13px; height: 14px; margin-right: auto; }
.cell { width: 19px; height: 18px; margin-right: 6px; font: bold 10px Roboto, sans-serif; letter-spacing: -.5px; fill: #ccc; overflow: visible; }
.cell text { transform: translateX(-3px); }
.bat { width: 12px; height: 18px; margin-right: 7px; }
.em-status time { width: 35px; font-size: 18.500px; letter-spacing: -.2px; color: #bbb; }
.em-bar { height: 63px; flex: none; background: #62738d; color: #fff; display: flex; align-items: center; padding: 0 25px 0 18px; }
.em-bar h2 { font-size: 23px; margin-right: auto; padding-top: 3px; }
.em-bar span { font-weight: bold; font-size: 13.500px; margin-right: 34px; }
.em-bar svg { width: 6px; height: 20px; }
.em-tabs { height: 56px; flex: none; display: grid; grid-template-columns: 137px 137px 137px; background: #62738d; border-bottom: 1px solid #a8aeb8; }
.em-tabs div { border-left: 1px solid #b8bfca; display: grid; place-items: center; padding: 2px 2px 0 0; }
.em-tabs .on { background: #414d66; padding: 3px 0 0; }
.house { width: 33px; height: 34px; }
.people { width: 43px; height: 33px; }
.stat { width: 32px; height: 35px; }
.em-body { height: 470px; flex: none; background: linear-gradient(#ededed, #fff 7px); }
.em-body dl { height: 188px; }
.em-body dl > div { height: 47px; display: flex; align-items: center; padding-left: 17px; font-size: 18px; letter-spacing: -.45px; color: #444; gap: 12px; }
.chart { width: 411px; height: 247px; }
.ax { font: 16px Roboto, sans-serif; fill: #222; }
.ax.y { text-anchor: end; }
.ax.x { text-anchor: middle; }
.em-body p { margin-top: 2px; font-size: 12px; line-height: 13px; letter-spacing: -.23px; color: #444; text-align: center; padding: 0 1px 0 0; }
.em-foot { height: 56px; flex: none; background: #62738d; border-top: 1px solid #a6b0bf; display: flex; align-items: center; padding-left: 7px; color: #e0e0e0; font-size: 23px; gap: 7px; }
.em-foot span { padding-top: 3px; }
.em-foot svg { width: 32px; height: 35px; }
.em-nav { flex: 1; background: #000; }
.em-nav svg { width: 411px; height: 30px; }
```
